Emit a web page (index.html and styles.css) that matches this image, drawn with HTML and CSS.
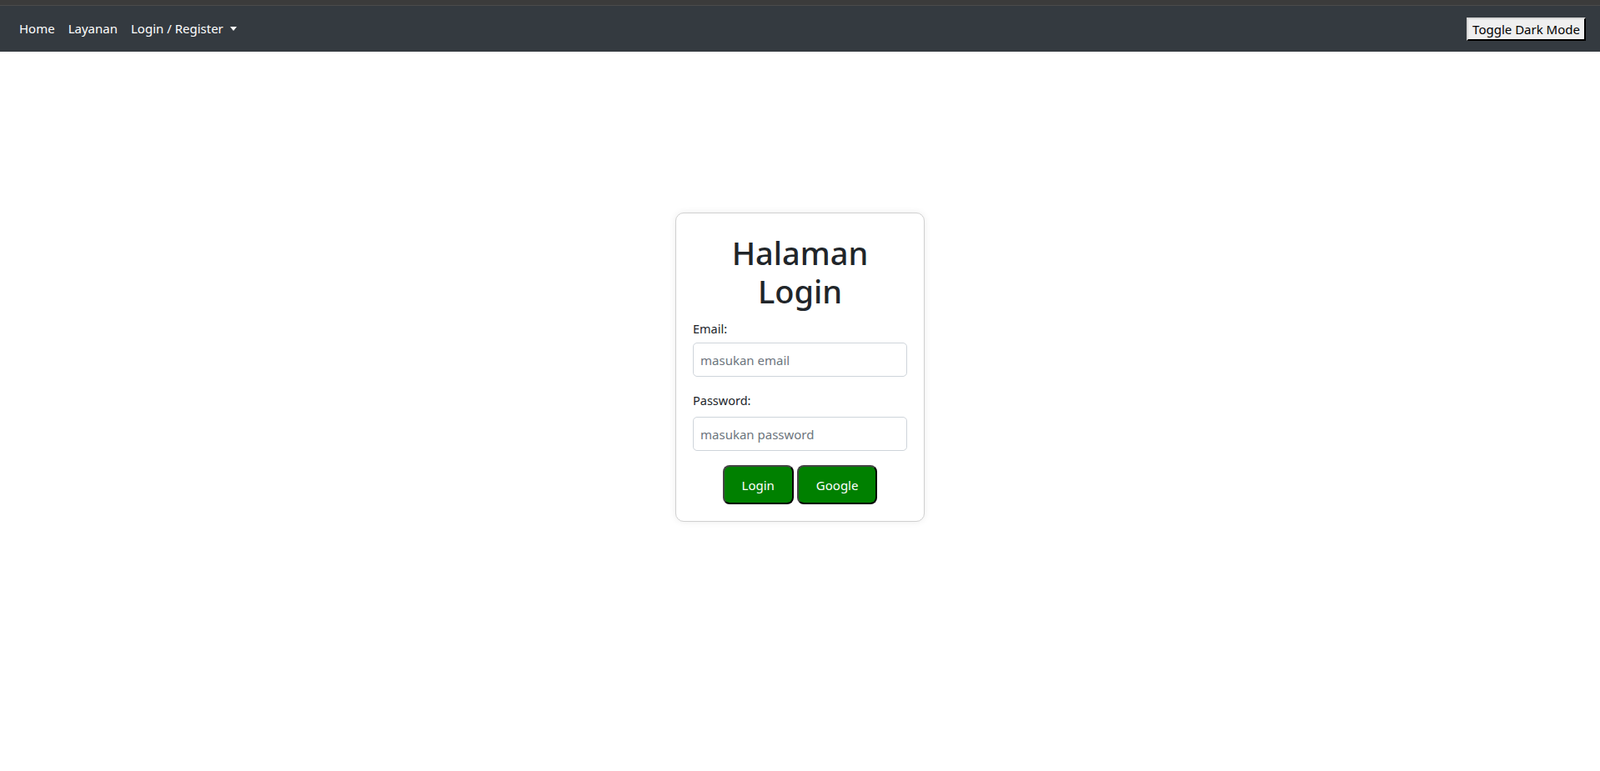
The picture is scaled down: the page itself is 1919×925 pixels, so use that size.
FILE: index.html
```html
<!DOCTYPE html>
<html lang="id">
<head>
<meta charset="utf-8">
<title>Halaman Login</title>
<link rel="stylesheet" href="styles.css">
</head>
<body>
<div class="topstrip"></div>
<nav class="navbar">
  <ul class="nav-links">
    <li><a class="nav-link" href="#">Home</a></li>
    <li><a class="nav-link" href="#">Layanan</a></li>
    <li><a class="nav-link dropdown-toggle" href="#">Login / Register</a></li>
  </ul>
  <button class="toggle-btn" type="button">Toggle Dark Mode</button>
</nav>
<main class="main">
  <div class="card">
    <h1 class="title">Halaman Login</h1>
    <form class="form">
      <div class="field">
        <label class="label" for="email">Email:</label>
        <input class="input" id="email" type="email" placeholder="masukan email">
      </div>
      <div class="field">
        <label class="label label-pw" for="password">Password:</label>
        <input class="input" id="password" type="password" placeholder="masukan password">
      </div>
      <div class="actions">
        <button class="btn" type="button">Login</button>
        <button class="btn" type="button">Google</button>
      </div>
    </form>
  </div>
</main>
</body>
</html>
```
FILE: styles.css
```css
* { box-sizing: border-box; }
html, body { margin: 0; padding: 0; }
body {
  font-family: "Noto Sans", "Open Sans", sans-serif;
  font-size: 16px;
  line-height: 1.5;
  color: #212529;
  background: #ffffff;
  min-height: 100vh;
}
.topstrip {
  height: 7px;
  background: #3b3b3b;
  border-bottom: 1px solid #4b4b4b;
}
.navbar {
  height: 55px;
  background: #343a40;
  display: flex;
  align-items: center;
  justify-content: space-between;
  padding: 0 17px 0 15px;
}
.nav-links {
  list-style: none;
  margin: 0;
  padding: 0;
  display: flex;
  align-items: center;
}
.nav-link {
  display: block;
  padding: 8px 8px;
  color: #ffffff;
  text-decoration: none;
  font-size: 15px;
}
.dropdown-toggle::after {
  content: "";
  display: inline-block;
  margin-left: 8px;
  vertical-align: 3px;
  border-top: 5px solid #ffffff;
  border-left: 4px solid transparent;
  border-right: 4px solid transparent;
}
.toggle-btn {
  font-family: inherit;
  font-size: 15px;
  line-height: 20px;
  color: #000;
  background: #efefef;
  border: 2px outset #d8d8d8;
  border-right-color: #000;
  border-bottom-color: #000;
  padding: 2px 5px;
}
.main {
  display: flex;
  justify-content: center;
  padding-top: 193px;
}
.card {
  width: 299px;
  border: 1px solid #d0d0d0;
  border-radius: 10px;
  box-shadow: 0 0 8px rgba(0, 0, 0, 0.08);
  padding: 20px 20px 20px;
  background: #fff;
}
.title {
  margin: 4px 0 11px;
  font-size: 38px;
  font-weight: 500;
  line-height: 46px;
  text-align: center;
}
.form { margin: 0; }
.field { margin-bottom: 17px; }
.label {
  display: block;
  font-size: 14.5px;
  line-height: 22px;
  margin-bottom: 6px;
}
.label-pw { margin-bottom: 9px; }
.input {
  display: block;
  width: 100%;
  height: 41px;
  padding: 8px 8px;
  font-family: inherit;
  font-size: 15px;
  color: #212529;
  border: 1px solid #ced4da;
  border-radius: 5px;
  background: #fff;
}
.input::placeholder { color: #6c757d; }
.actions {
  display: flex;
  justify-content: center;
  gap: 4px;
}
.btn {
  font-family: inherit;
  font-size: 15px;
  line-height: 22px;
  color: #fff;
  background: #008000;
  border: 2px solid #000;
  border-top-color: #444;
  border-left-color: #444;
  border-radius: 8px;
  padding: 10px 21px;
  height: 47px;
}
```
